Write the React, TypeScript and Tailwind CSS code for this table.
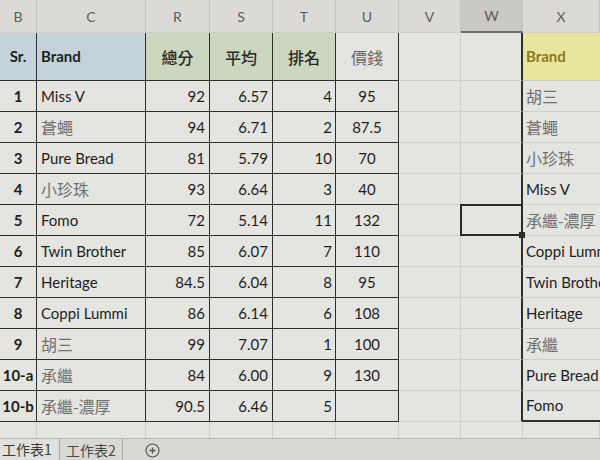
import React from "react";

type Row = { sr: string; brand: string; cjk: boolean; r: string; s: string; t: string; u: string; x: string; xcjk: boolean };

const rows: Row[] = [
  { sr: "1", brand: "Miss V", cjk: false, r: "92", s: "6.57", t: "4", u: "95", x: "胡三", xcjk: true },
  { sr: "2", brand: "蒼蠅", cjk: true, r: "94", s: "6.71", t: "2", u: "87.5", x: "蒼蠅", xcjk: true },
  { sr: "3", brand: "Pure Bread", cjk: false, r: "81", s: "5.79", t: "10", u: "70", x: "小珍珠", xcjk: true },
  { sr: "4", brand: "小珍珠", cjk: true, r: "93", s: "6.64", t: "3", u: "40", x: "Miss V", xcjk: false },
  { sr: "5", brand: "Fomo", cjk: false, r: "72", s: "5.14", t: "11", u: "132", x: "承繼-濃厚", xcjk: true },
  { sr: "6", brand: "Twin Brother", cjk: false, r: "85", s: "6.07", t: "7", u: "110", x: "Coppi Lummi", xcjk: false },
  { sr: "7", brand: "Heritage", cjk: false, r: "84.5", s: "6.04", t: "8", u: "95", x: "Twin Brother", xcjk: false },
  { sr: "8", brand: "Coppi Lummi", cjk: false, r: "86", s: "6.14", t: "6", u: "108", x: "Heritage", xcjk: false },
  { sr: "9", brand: "胡三", cjk: true, r: "99", s: "7.07", t: "1", u: "100", x: "承繼", xcjk: true },
  { sr: "10-a", brand: "承繼", cjk: true, r: "84", s: "6.00", t: "9", u: "130", x: "Pure Bread", xcjk: false },
  { sr: "10-b", brand: "承繼-濃厚", cjk: true, r: "90.5", s: "6.46", t: "5", u: "", x: "Fomo", xcjk: false },
];

const letters = ["B", "C", "R", "S", "T", "U", "V", "W", "X"];

const cjkCls = "font-['Noto_Sans_CJK_TC',sans-serif] text-[16px] text-[#707070]";
const latCls = "text-[15px] text-[#1e1e1e]";

export default function App() {
  return (
    <div className="w-[600px] h-[460px] overflow-hidden bg-[#e4e4e1] font-['Lato','Noto_Sans_CJK_TC',sans-serif] text-[#1e1e1e] flex flex-col">
      <div className="grid grid-cols-[37px_109px_64px_63px_63px_63px_62px_62px_77px]">
        {letters.map((l, i) => (
          <div
            key={l}
            className={
              i === 7
                ? "h-[33px] flex items-center justify-center text-[14px] text-[#5c5c5c] bg-[#cbc9c5] border-r border-r-[#c2c2bd] border-b-2 border-b-[#6e6e6e]"
                : "h-[33px] flex items-center justify-center text-[14px] text-[#5c5c5c] bg-[#dbdad6] border-r border-r-[#c6c6c1] border-b border-b-[#cfcfca]"
            }
          >
            {l}
          </div>
        ))}

        {/* header row */}
        <div className="h-[48px] flex items-center justify-center bg-[#c4d3d9] border-r border-b border-[#2e2e2e] text-[15px] font-bold">Sr.</div>
        <div className="h-[48px] flex items-center pl-[4px] bg-[#c4d3d9] border-r border-b border-[#2e2e2e] text-[15px] font-bold">Brand</div>
        <div className="h-[48px] flex items-center justify-center bg-[#cbd7be] border-r border-b border-[#2e2e2e] font-['Noto_Sans_CJK_TC',sans-serif] text-[16px] font-medium text-[#2a2a2a]">總分</div>
        <div className="h-[48px] flex items-center justify-center bg-[#cbd7be] border-r border-b border-[#2e2e2e] font-['Noto_Sans_CJK_TC',sans-serif] text-[16px] font-medium text-[#2a2a2a]">平均</div>
        <div className="h-[48px] flex items-center justify-center bg-[#cbd7be] border-r border-b border-[#2e2e2e] font-['Noto_Sans_CJK_TC',sans-serif] text-[16px] font-medium text-[#2a2a2a]">排名</div>
        <div className="h-[48px] flex items-center justify-center border-r border-b border-[#2e2e2e] font-['Noto_Sans_CJK_TC',sans-serif] text-[16px] text-[#666666]">價錢</div>
        <div className="h-[48px] border-r border-b border-[#cfcfcb]"></div>
        <div className="h-[48px] border-r-2 border-r-[#2e2e2e] border-b border-b-[#cfcfcb]"></div>
        <div className="h-[48px] flex items-center pl-[3px] bg-[#e8e59f] border-b border-b-[#cfcfcb] text-[15px] font-bold text-[#8a7a1e]">Brand</div>

        {rows.map((r, i) => {
          const last = i === rows.length - 1;
          return (
            <React.Fragment key={r.sr}>
              <div className="h-[31px] flex items-center justify-center border-r border-b border-[#2e2e2e] text-[15px] font-bold">{r.sr}</div>
              <div className={"h-[31px] flex items-center pl-[4px] whitespace-nowrap border-r border-b border-[#2e2e2e] " + (r.cjk ? cjkCls : latCls)}>{r.brand}</div>
              <div className="h-[31px] flex items-center justify-end pr-[4px] border-r border-b border-[#2e2e2e] text-[15px]">{r.r}</div>
              <div className="h-[31px] flex items-center justify-end pr-[4px] border-r border-b border-[#2e2e2e] text-[15px]">{r.s}</div>
              <div className="h-[31px] flex items-center justify-end pr-[3px] border-r border-b border-[#2e2e2e] text-[15px]">{r.t}</div>
              <div className="h-[31px] flex items-center justify-center border-r border-b border-[#2e2e2e] text-[15px]">{r.u}</div>
              <div className="h-[31px] border-r border-b border-[#cfcfcb]"></div>
              <div className="relative h-[31px] border-r-2 border-r-[#2e2e2e] border-b border-b-[#cfcfcb]">
                {i === 4 && (
                  <>
                    <div className="absolute -left-px -top-px -right-[2px] -bottom-px border-2 border-[#2b2b2b]"></div>
                    <div className="absolute -right-[4px] -bottom-[3px] w-[6px] h-[6px] bg-[#2b2b2b]"></div>
                  </>
                )}
              </div>
              <div className={"h-[31px] flex items-center pl-[3px] whitespace-nowrap overflow-hidden " + (last ? "border-b-2 border-b-[#2e2e2e] " : "border-b border-b-[#cfcfcb] ") + (r.xcjk ? cjkCls : latCls)}>{r.x}</div>
            </React.Fragment>
          );
        })}

        {letters.map((l) => (
          <div key={"e" + l} className="h-[16px] border-r border-r-[#cfcfcb]"></div>
        ))}
      </div>

      <div className="flex-1 flex items-stretch bg-[#d8d8d4] border-t border-t-[#b8b8b3] font-['Noto_Sans_CJK_TC',sans-serif] text-[14px] text-[#3a3a3a]">
        <div className="flex items-center px-[2px] w-[59px] bg-[#e0e0dc] border-b-2 border-b-[#3a3a3a]">工作表1</div>
        <div className="flex items-center justify-center w-[64px] border-l border-r border-[#a8a8a3] text-[#4a4a4a]">工作表2</div>
        <div className="flex items-center ml-[22px]">
          <svg width="15" height="15" viewBox="0 0 15 15">
            <circle cx="7.5" cy="7.5" r="6.5" fill="none" stroke="#555" strokeWidth="1.2" />
            <path d="M7.5 4.5v6M4.5 7.5h6" stroke="#555" strokeWidth="1.3" />
          </svg>
        </div>
      </div>
    </div>
  );
}
